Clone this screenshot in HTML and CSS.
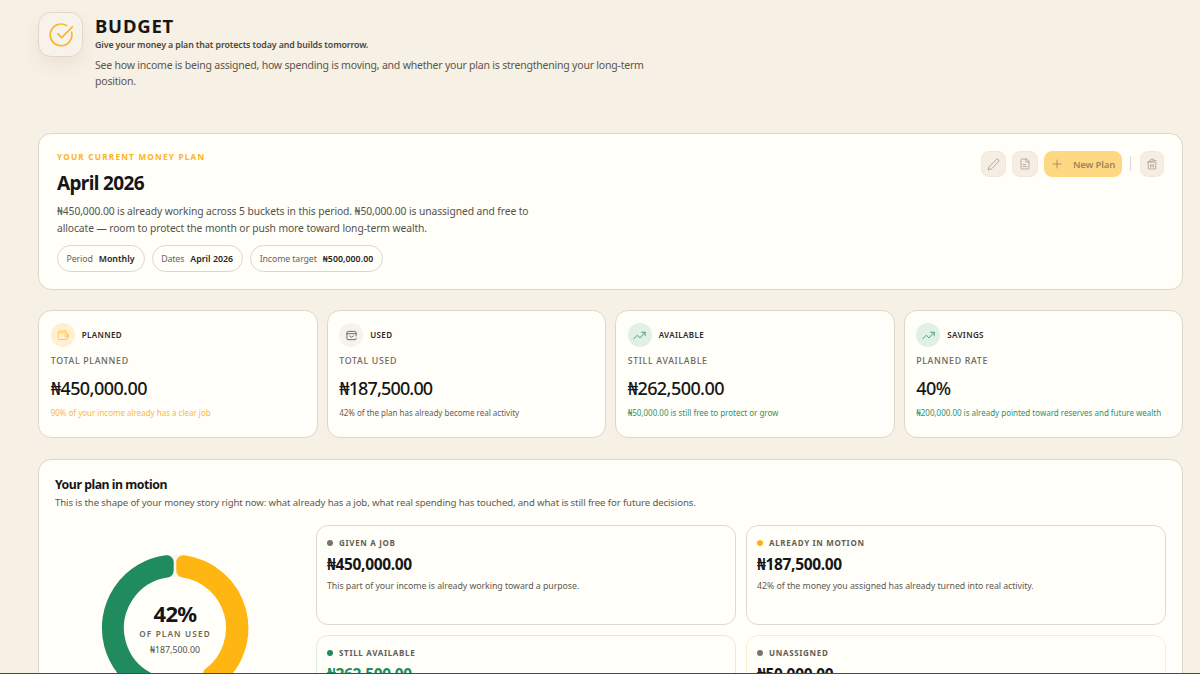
FILE: index.html
```html
<!DOCTYPE html>
<html lang="en">
<head>
  <meta charset="UTF-8" />
  <meta name="viewport" content="width=device-width, initial-scale=1.0" />
  <title>Budget</title>
  <link rel="stylesheet" href="styles.css">
</head>
<body>
  <main class="page">
    <header class="page-header">
      <div class="page-icon">
        <svg width="26" height="26" viewBox="0 0 24 24"><path d="M21.8 9.6A10 10 0 1 1 17 3.2"/><path d="m9.2 11 3.4 3.4L22.5 4.5"/></svg>
      </div>
      <div class="page-heading">
        <h1>BUDGET</h1>
        <p class="tagline">Give your money a plan that protects today and builds tomorrow.</p>
        <p class="intro">See how income is being assigned, how spending is moving, and whether your plan is strengthening your long-term<br>position.</p>
      </div>
    </header>

    <section class="card plan">
      <div class="plan-info">
        <div class="kicker">YOUR CURRENT MONEY PLAN</div>
        <h2>April 2026</h2>
        <p class="plan-text">₦450,000.00 is already working across 5 buckets in this period. ₦50,000.00 is unassigned and free to<br>allocate — room to protect the month or push more toward long-term wealth.</p>
        <div class="pills">
          <div class="pill">Period <b>Monthly</b></div>
          <div class="pill">Dates <b>April 2026</b></div>
          <div class="pill">Income target <b>₦500,000.00</b></div>
        </div>
      </div>
      <div class="actions">
        <button class="icon-btn edit" aria-label="Edit">
          <svg width="13" height="13" viewBox="0 0 24 24"><path d="M21.2 6.8a2.8 2.8 0 0 0-4-4L3.8 16.2 2 22l5.8-1.8z"/></svg>
        </button>
        <button class="icon-btn" aria-label="Report">
          <svg width="12" height="12" viewBox="0 0 24 24"><path d="M14.5 2H6a2 2 0 0 0-2 2v16a2 2 0 0 0 2 2h12a2 2 0 0 0 2-2V7.5z"/><path d="M14 2v6h6M8 13h5M8 17h8"/></svg>
        </button>
        <button class="new-btn">
          <svg width="12" height="12" viewBox="0 0 24 24"><path d="M4 12h16M12 4v16"/></svg>
          <span>New Plan</span>
        </button>
        <span class="divider"></span>
        <button class="icon-btn trash" aria-label="Delete">
          <svg width="12" height="12" viewBox="0 0 24 24"><path d="M3 7.5 20 5M8 6l1-3 6-1 1 3M4 9l1 13h14l1-13zM9 13v5M12 13v5M15 13v5"/></svg>
        </button>
      </div>
    </section>

    <section class="stats">
      <div class="card stat">
        <div class="stat-head">
          <span class="stat-icon amber"><svg width="12" height="12" viewBox="0 0 24 24"><path d="M18 7V3.5H5a2.5 2.5 0 0 0 0 4h14a2 2 0 0 1 2 2V19a2 2 0 0 1-2 2H5a2.5 2.5 0 0 1-2.500-2.500V5"/><path d="M22 11h-4a2.5 2.5 0 0 0 0 5h4z"/></svg></span>
          <span class="tag">PLANNED</span>
        </div>
        <div class="stat-label">TOTAL PLANNED</div>
        <div class="stat-value">₦450,000.00</div>
        <div class="stat-note note-amber">90% of your income already has a clear job</div>
      </div>
      <div class="card stat">
        <div class="stat-head">
          <span class="stat-icon gray"><svg width="11" height="11" viewBox="0 0 24 24"><path d="M22 13V6a3 3 0 0 0-3-3H5a3 3 0 0 0-3 3v13a2 2 0 0 0 2 2h16a2 2 0 0 0 2-2v-1M2 8h20M8 13l4 3 4-3"/></svg></span>
          <span class="tag">USED</span>
        </div>
        <div class="stat-label">TOTAL USED</div>
        <div class="stat-value value-used">₦187,500.00</div>
        <div class="stat-note">42% of the plan has already become real activity</div>
      </div>
      <div class="card stat">
        <div class="stat-head">
          <span class="stat-icon green"><svg width="13" height="13" viewBox="0 0 24 24"><path d="M1.5 18 8 11.5l5 5L22.5 6M16 6h6.5v6.5"/></svg></span>
          <span class="tag">AVAILABLE</span>
        </div>
        <div class="stat-label">STILL AVAILABLE</div>
        <div class="stat-value">₦262,500.00</div>
        <div class="stat-note note-green">₦50,000.00 is still free to protect or grow</div>
      </div>
      <div class="card stat">
        <div class="stat-head">
          <span class="stat-icon green"><svg width="13" height="13" viewBox="0 0 24 24"><path d="M1.5 18 8 11.5l5 5L22.5 6M16 6h6.5v6.5"/></svg></span>
          <span class="tag">SAVINGS</span>
        </div>
        <div class="stat-label">PLANNED RATE</div>
        <div class="stat-value">40%</div>
        <div class="stat-note note-green">₦200,000.00 is already pointed toward reserves and future wealth</div>
      </div>
    </section>

    <section class="card motion">
      <h3>Your plan in motion</h3>
      <p class="motion-text">This is the shape of your money story right now: what already has a job, what real spending has touched, and what is still free for future decisions.</p>
      <div class="motion-body">
        <div class="chart">
          <svg width="148" height="148" viewBox="0 0 148 148">
            <circle class="track" cx="74" cy="74" r="62"/>
            <path class="arc arc-used" d="M82.3 8.2A66.3 66.3 0 0 1 113.2 127.5L109.1 120.2A58 58 0 0 0 82.3 16.6Z"/>
            <path class="arc arc-left" d="M98.6 135.6A66.3 66.3 0 1 1 65.7 8.2L65.7 16.6A58 58 0 1 0 94.6 128.2Z"/>
          </svg>
          <div class="chart-center">
            <div class="chart-value">42%</div>
            <div class="chart-label">OF PLAN USED</div>
            <div class="chart-amount">₦187,500.00</div>
          </div>
        </div>
        <div class="tiles">
          <div class="tile">
            <div class="tile-label"><i class="dot"></i>GIVEN A JOB</div>
            <div class="tile-value">₦450,000.00</div>
            <div class="tile-text">This part of your income is already working toward a purpose.</div>
          </div>
          <div class="tile">
            <div class="tile-label"><i class="dot dot-amber"></i>ALREADY IN MOTION</div>
            <div class="tile-value">₦187,500.00</div>
            <div class="tile-text">42% of the money you assigned has already turned into real activity.</div>
          </div>
          <div class="tile tile-green">
            <div class="tile-label"><i class="dot dot-green"></i>STILL AVAILABLE</div>
            <div class="tile-value">₦262,500.00</div>
          </div>
          <div class="tile tile-amber">
            <div class="tile-label"><i class="dot"></i>UNASSIGNED</div>
            <div class="tile-value">₦50,000.00</div>
          </div>
        </div>
      </div>
    </section>
  </main>
  <div class="bottom-edge"></div>
</body>
</html>
```
FILE: styles.css
```css
* { box-sizing: border-box; }

body {
  margin: 0;
  height: 674px;
  overflow: hidden;
  background: #f7f0e4;
  color: #161616;
  font-family: "Noto Sans", "Open Sans", sans-serif;
}

h1, h2, h3, p { margin: 0; }

svg {
  display: block;
  fill: none;
  stroke: currentColor;
  stroke-width: 2;
  stroke-linecap: round;
  stroke-linejoin: round;
}

.page {
  height: 674px;
  padding: 12px 17px 0 38px;
  overflow: hidden;
}

.card {
  background: #fffef9;
  border: 1px solid #ddd7ca;
  border-radius: 13px;
}

/* header */
.page-header {
  display: flex;
  gap: 12px;
  height: 121px;
}

.page-icon {
  display: flex;
  align-items: center;
  justify-content: center;
  width: 45px;
  height: 45px;
  border: 1px solid #dfd8cb;
  border-radius: 13px;
  background: #f8f3ea;
  color: #fdb62c;
  box-shadow: 0 8px 18px rgba(90, 80, 50, 0.08);
}

.page-icon svg { stroke-width: 1.6; }

.page-heading { padding-top: 3px; }

h1 {
  font-size: 18.5px;
  line-height: 22px;
  letter-spacing: 0.8px;
}

.tagline {
  margin-top: 2px;
  font-size: 8.8px;
  font-weight: 600;
  line-height: 13px;
  letter-spacing: -0.1px;
  color: #4a4740;
}

.intro {
  margin-top: 5px;
  font-size: 10.5px;
  line-height: 16px;
  letter-spacing: -0.21px;
  color: #5a564d;
  white-space: nowrap;
}

/* current plan */
.plan {
  display: flex;
  justify-content: space-between;
  height: 157px;
  padding: 16px 18px 0;
}

.kicker {
  font-size: 8.2px;
  font-weight: 700;
  line-height: 14px;
  letter-spacing: 1.23px;
  color: #fbb424;
}

h2 {
  margin-top: 6px;
  font-size: 19px;
  line-height: 26px;
  letter-spacing: -0.65px;
}

.plan-text {
  margin-top: 7px;
  font-size: 10.3px;
  line-height: 16.5px;
  letter-spacing: -0.09px;
  color: #55524a;
  white-space: nowrap;
}

.pills {
  display: flex;
  gap: 7px;
  margin-top: 9px;
}

.pill {
  display: flex;
  align-items: center;
  gap: 6px;
  height: 27px;
  padding: 0 9px 0 8.5px;
  border: 1px solid #d9d8cc;
  border-radius: 14px;
  font-size: 8.8px;
  letter-spacing: -0.12px;
  color: #68645b;
}

.pill b {
  color: #262522;
  font-weight: 600;
  letter-spacing: 0.03px;
}

.actions {
  display: flex;
  align-items: flex-start;
  gap: 6px;
  padding-top: 1px;
}

.icon-btn, .new-btn {
  display: flex;
  align-items: center;
  justify-content: center;
  height: 26px;
  padding: 0;
  border: 1px solid #f1e8db;
  border-radius: 8px;
  background: #f6eee3;
  color: #aaa49a;
  font-family: inherit;
}

.icon-btn { width: 26px; }
.icon-btn svg { stroke-width: 1.7; }
.edit { width: 25px; }
.trash { width: 24px; }

.new-btn {
  gap: 10px;
  width: 78px;
  border-color: #ffd884;
  background: #ffd884;
  color: #9b8659;
  font-size: 9.5px;
  font-weight: 600;
  letter-spacing: -0.15px;
}

.new-btn svg { stroke-width: 1.7; }

.divider {
  width: 1px;
  height: 15px;
  margin: 5px 3px 0 2px;
  background: #dedad2;
}

/* stats */
.stats {
  display: grid;
  grid-template-columns: repeat(4, 1fr);
  gap: 9px;
  margin: 20px 0 21px;
}

.stat {
  height: 128px;
  padding: 12px 11.7px 0;
}

.stat-head {
  display: flex;
  align-items: center;
  gap: 7px;
}

.stat-icon {
  display: flex;
  align-items: center;
  justify-content: center;
  width: 24px;
  height: 24px;
  border-radius: 50%;
}

.stat-icon svg { stroke-width: 1.8; }
.amber { background: #fff0d3; color: #fdc34d; }
.gray { background: #f4f3f0; color: #55534f; }
.green { background: #e1f0e6; color: #46a07a; }

.tag {
  font-size: 8px;
  font-weight: 600;
  line-height: 10px;
  letter-spacing: 0.38px;
  color: #2a2926;
}

.stat-label {
  margin-top: 6px;
  font-size: 8.8px;
  font-weight: 500;
  line-height: 16px;
  letter-spacing: 0.68px;
  color: #6a665c;
}

.stat-value {
  margin-top: 7px;
  font-size: 18px;
  font-weight: 500;
  line-height: 25px;
  letter-spacing: -0.57px;
}

.value-used { letter-spacing: -0.85px; }

.stat-note {
  margin-top: 5px;
  font-size: 8px;
  line-height: 14px;
  letter-spacing: -0.01px;
  color: #625f57;
  white-space: nowrap;
}

.note-amber { color: #fdb93a; }
.note-green { color: #2f9368; }

/* plan in motion */
.motion {
  height: 400px;
  padding: 15.5px 16px 0;
}

h3 {
  font-size: 12.3px;
  font-weight: 700;
  line-height: 18px;
  letter-spacing: -0.46px;
}

.motion-text {
  margin-top: 2.5px;
  font-size: 9.6px;
  line-height: 14px;
  letter-spacing: -0.11px;
  color: #5d5a52;
  white-space: nowrap;
}

.motion-body {
  display: flex;
  gap: 21px;
  margin-top: 15px;
}

.chart {
  display: grid;
  width: 240px;
  padding-top: 29px;
  place-items: center;
  align-content: start;
}

.chart > * { grid-area: 1 / 1; }

.track { stroke: #faf5ef; stroke-width: 22; }
.arc { stroke-width: 14; }
.arc-used { fill: #ffb512; stroke: #ffb512; }
.arc-left { fill: #208b5d; stroke: #208b5d; }

.chart-center { padding-top: 2px; text-align: center; }

.chart-value {
  font-size: 22px;
  font-weight: 700;
  line-height: 25px;
  letter-spacing: -0.7px;
}

.chart-label {
  margin-top: 1px;
  font-size: 8.2px;
  font-weight: 600;
  line-height: 14px;
  letter-spacing: 1.15px;
  color: #6a665c;
}

.chart-amount {
  margin-top: 2px;
  font-size: 8.8px;
  line-height: 14px;
  color: #55524a;
}

.tiles {
  display: grid;
  flex: 1;
  grid-template-columns: 1fr 1fr;
  grid-auto-rows: 100px;
  gap: 10px;
}

.tile {
  padding: 10px 10px 0;
  border: 1px solid #ddd9cf;
  border-radius: 12px;
}

.tile-green { border-color: #e0ece1; }
.tile-green .tile-value { color: #208b5d; }
.tile-amber { border-color: #f5ecd2; }

.tile-label {
  display: flex;
  align-items: center;
  gap: 6px;
  font-size: 8px;
  font-weight: 700;
  line-height: 14px;
  letter-spacing: 0.68px;
  color: #625e55;
}

.dot {
  width: 6px;
  height: 6px;
  border-radius: 50%;
  background: #77736a;
}

.dot-amber { background: #fbb11a; }
.dot-green { background: #208b5d; }

.tile-value {
  margin-top: 4px;
  font-size: 15.5px;
  font-weight: 700;
  line-height: 20px;
  letter-spacing: -0.35px;
}

.tile-text {
  margin-top: 5px;
  font-size: 8.8px;
  line-height: 14px;
  letter-spacing: -0.06px;
  color: #5d5a52;
}

/* dark hairline along the window bottom */
.bottom-edge {
  position: fixed;
  right: 0;
  bottom: 0;
  left: 0;
  height: 1px;
  background: #4b4a47;
}
```
